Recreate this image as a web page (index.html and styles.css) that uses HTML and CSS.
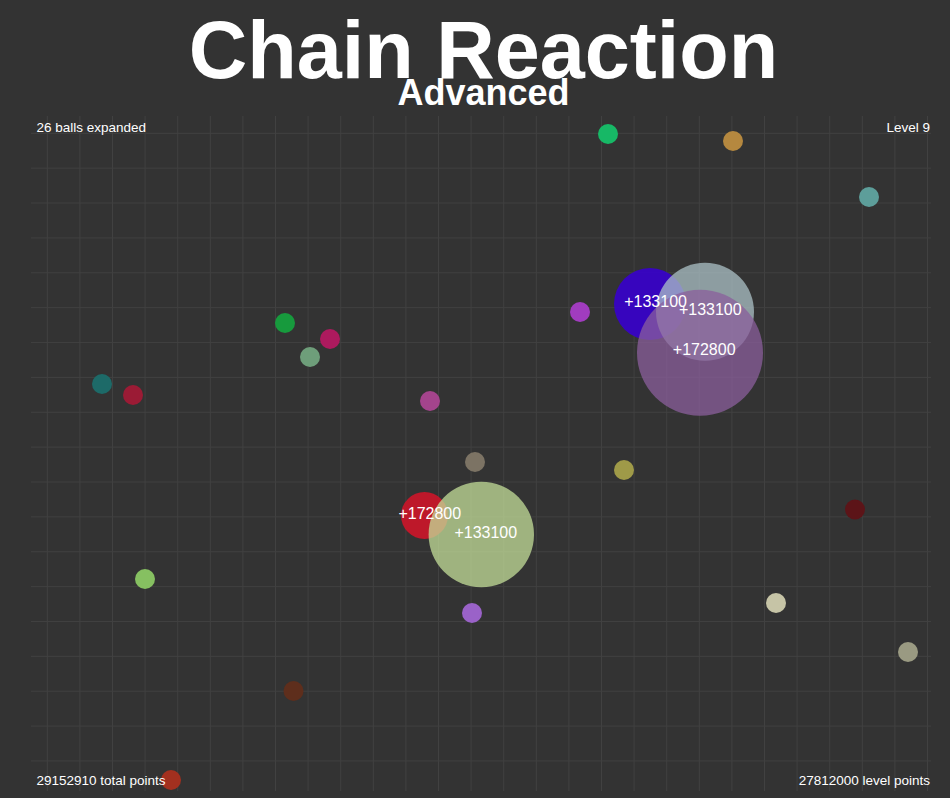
FILE: index.html
```html
<!DOCTYPE html>
<html lang="en">
<head>
<meta charset="utf-8">
<title>Chain Reaction</title>
<link rel="stylesheet" href="styles.css">
</head>
<body>
<header class="header">
  <h1 class="title">Chain Reaction</h1>
  <h2 class="subtitle">Advanced</h2>
</header>
<main class="game">
  <svg class="board" width="900" height="675" viewBox="0 0 900 675" xmlns="http://www.w3.org/2000/svg">
    <path class="grid" d="M16.3 0V675M48.9 0V675M81.5 0V675M114.1 0V675M146.7 0V675M179.3 0V675M211.9 0V675M244.5 0V675M277.1 0V675M309.7 0V675M342.3 0V675M374.9 0V675M407.5 0V675M440.1 0V675M472.7 0V675M505.3 0V675M537.9 0V675M570.5 0V675M603.1 0V675M635.7 0V675M668.3 0V675M700.9 0V675M733.5 0V675M766.1 0V675M798.7 0V675M831.3 0V675M863.9 0V675M896.5 0V675M0 17.3H900M0 52.17H900M0 87.04H900M0 121.91H900M0 156.78H900M0 191.65H900M0 226.52H900M0 261.39H900M0 296.26H900M0 331.13H900M0 366H900M0 400.87H900M0 435.74H900M0 470.61H900M0 505.48H900M0 540.35H900M0 575.22H900M0 610.09H900M0 644.96H900"/>
    <g class="balls">
      <circle cx="577" cy="18" r="10" fill="#17b866"/>
      <circle cx="702" cy="25" r="10" fill="#b5883f"/>
      <circle cx="838" cy="81" r="10" fill="#5d9e9a"/>
      <circle cx="549" cy="196" r="10" fill="#a13cbf"/>
      <circle cx="254" cy="207" r="10" fill="#179a3d"/>
      <circle cx="299" cy="223" r="10" fill="#ad1a5e"/>
      <circle cx="279" cy="241" r="10" fill="#6e9e7a"/>
      <circle cx="71" cy="268" r="10" fill="#1d6a68"/>
      <circle cx="102" cy="279" r="10" fill="#9b1b35"/>
      <circle cx="399" cy="285" r="10" fill="#a4448c"/>
      <circle cx="444" cy="346" r="10" fill="#7c7364"/>
      <circle cx="593" cy="354" r="10" fill="#9f9a48"/>
      <circle cx="824" cy="393.5" r="10" fill="#5c1418"/>
      <circle cx="114" cy="463" r="10" fill="#86c061"/>
      <circle cx="441" cy="497" r="10" fill="#9a62c8"/>
      <circle cx="262.5" cy="575" r="10" fill="#5e2e1c"/>
      <circle cx="745" cy="487" r="10" fill="#c6c4a6"/>
      <circle cx="877" cy="536" r="10" fill="#9a9a82"/>
      <circle cx="140" cy="664" r="10" fill="#a3301f"/>
    </g>
    <g class="blasts">
      <circle cx="619" cy="188" r="36" fill="rgb(55,0,205)" fill-opacity="0.9"/>
      <circle cx="674" cy="195.7" r="49" fill="rgb(172,194,199)" fill-opacity="0.75"/>
      <circle cx="669" cy="236.7" r="63" fill="rgb(139,95,156)" fill-opacity="0.75"/>
      <circle cx="393.5" cy="399.5" r="23.5" fill="rgb(205,21,41)" fill-opacity="0.9"/>
      <circle cx="450.3" cy="418.5" r="52.7" fill="rgb(196,223,154)" fill-opacity="0.75"/>
    </g>
    <g class="scores">
      <text x="624.6" y="191.3">+133100</text>
      <text x="679.3" y="199">+133100</text>
      <text x="673.2" y="239">+172800</text>
      <text x="398.8" y="402.7">+172800</text>
      <text x="454.8" y="421.7">+133100</text>
    </g>
  </svg>
  <div class="stat stat-tl">26 balls expanded</div>
  <div class="stat stat-tr">Level 9</div>
  <div class="stat stat-bl">29152910 total points</div>
  <div class="stat stat-br">27812000 level points</div>
</main>
</body>
</html>
```
FILE: styles.css
```css
html, body {
  margin: 0;
  padding: 0;
  background: #333333;
  color: #ffffff;
  font-family: "Liberation Sans", Arial, sans-serif;
}

.header {
  width: 895px;
  margin-left: 31px;
  padding-top: 21px;
  padding-left: 5px;
  text-align: center;
}

.title {
  margin: 0;
  font-size: 81px;
  line-height: 58px;
  font-weight: bold;
}

.subtitle {
  margin: 0;
  font-size: 36px;
  line-height: 28px;
  font-weight: bold;
}

.game {
  position: relative;
  width: 900px;
  height: 675px;
  margin: 9px 0 0 31px;
}

.board {
  display: block;
}

.grid {
  fill: none;
  stroke: #414141;
  stroke-width: 1;
}

.scores text {
  fill: #ffffff;
  font-family: "Liberation Sans", Arial, sans-serif;
  font-size: 16px;
  text-anchor: middle;
}

.stat {
  position: absolute;
  font-size: 13.5px;
  line-height: 13.5px;
  white-space: nowrap;
}

.stat-tl { top: 5px; left: 5.5px; }
.stat-tr { top: 5px; right: 1px; }
.stat-bl { bottom: 4px; left: 5.5px; }
.stat-br { bottom: 4px; right: 1px; }
```
